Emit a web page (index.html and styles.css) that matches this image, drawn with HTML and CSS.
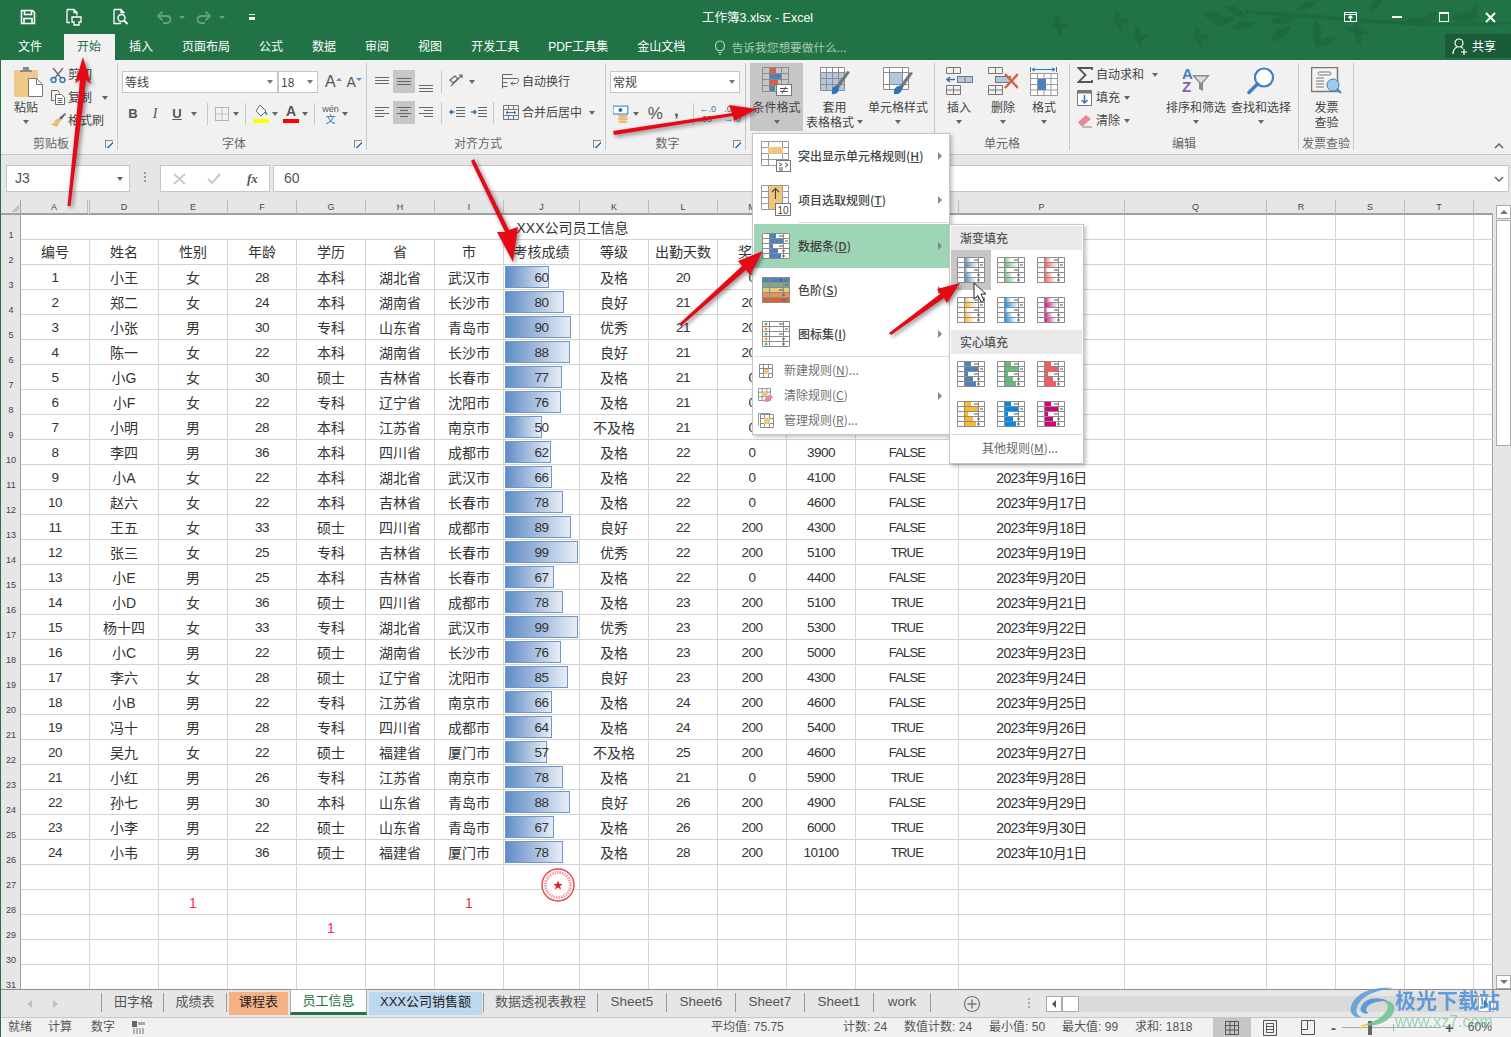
FILE: index.html
```html
<!DOCTYPE html>
<html lang="zh-CN">
<head>
<meta charset="utf-8">
<title>工作簿3.xlsx - Excel</title>
<link rel="stylesheet" href="styles.css">
</head>
<body>
<svg class="defs" width="0" height="0" aria-hidden="true">
  <defs>
    <linearGradient id="gb"><stop offset="0" stop-color="#4f81bd"/><stop offset="1" stop-color="#fff"/></linearGradient>
    <linearGradient id="gg"><stop offset="0" stop-color="#63be7b"/><stop offset="1" stop-color="#fff"/></linearGradient>
    <linearGradient id="gr"><stop offset="0" stop-color="#ff555a"/><stop offset="1" stop-color="#fff"/></linearGradient>
    <linearGradient id="go"><stop offset="0" stop-color="#ffb628"/><stop offset="1" stop-color="#fff"/></linearGradient>
    <linearGradient id="gl"><stop offset="0" stop-color="#008aef"/><stop offset="1" stop-color="#fff"/></linearGradient>
    <linearGradient id="gp"><stop offset="0" stop-color="#d6007b"/><stop offset="1" stop-color="#fff"/></linearGradient>
    <symbol id="tgrid" viewBox="0 0 28 26">
      <path d="M.5.5h27v25H.5zM.5 5.500h27M.5 10.500h27M.5 15.500h27M.5 20.500h27M7.500.5v25M21.500.5v25" fill="none" stroke="#8c8c8c"/>
      <path d="M17 3h4M23 8h3M17 13h4M20 18h3M20 23h3" stroke="#555" fill="none"/>
    </symbol>
    <symbol id="tbars" viewBox="0 0 28 26">
      <rect x="7" y="1" width="7" height="4"/><rect x="7" y="6" width="14" height="4"/><rect x="7" y="11" width="4" height="4"/><rect x="7" y="16" width="9" height="4"/><rect x="7" y="21" width="12" height="4"/>
    </symbol>
    <symbol id="sgrid" viewBox="0 0 14 14">
      <path d="M.5.5h13v13H.5zM.5 4.500h13M.5 9.500h13M4.500.5v13M9.500.5v13" fill="none" stroke="#8c8c8c"/>
    </symbol>
    <path id="leaf" d="M0 0Q9-9 24-1 12 7 0 0Z"/>
    <path id="bird" d="M-9 1l5-1 1-8q2-4 4-1l2 8 7-1-1 5-5 0-1 9-4-5-1-5Z"/>
  </defs>
</svg>

<div class="app">
  <header class="titlebar">
    <svg class="leaves" width="511" height="60" viewBox="1000 0 511 60" aria-hidden="true">
      <g fill="#1e6a3f">
        <use href="#bird" x="1058" y="25"/><use href="#bird" x="1118" y="20"/><use href="#bird" x="1138" y="36"/><use href="#bird" x="1198" y="36"/>
        <path d="M1245 10c40 2 80 5 110 8 40 2 80 8 155 4v2c-70 5-115 0-155-2-30-3-70-5-110-9Z"/>
        <use href="#leaf" transform="translate(1202 14) rotate(15)"/><use href="#leaf" transform="translate(1212 25) rotate(-15)"/><use href="#leaf" transform="translate(1232 28) rotate(-10)"/>
        <use href="#leaf" transform="translate(1225 6) rotate(30)"/><use href="#leaf" transform="translate(1270 22) rotate(-5) scale(1.1)"/><use href="#leaf" transform="translate(1270 42) rotate(-35) scale(1.1)"/>
        <use href="#leaf" transform="translate(1316 20) rotate(90) scale(1.1)"/><use href="#leaf" transform="translate(1315 46) rotate(-20)"/><use href="#leaf" transform="translate(1296 10) rotate(-20)"/>
        <use href="#leaf" transform="translate(1355 22) rotate(80)"/><use href="#leaf" transform="translate(1406 20) rotate(10)"/><use href="#leaf" transform="translate(1420 28) rotate(-40)"/>
        <use href="#leaf" transform="translate(1450 18) rotate(0) scale(1.2)"/><use href="#leaf" transform="translate(1470 25) rotate(-70) scale(.9)"/><use href="#leaf" transform="translate(1346 28) rotate(15)"/>
        <use href="#leaf" transform="translate(1370 12) rotate(-50)"/>
      </g>
    </svg>
    <div class="qat">
      <svg class="q1" width="16" height="16" viewBox="0 0 16 16"><path d="M1.500 1.500h11l2 2v11h-13zM4.500 1.500v4h7v-4M4 14.500v-5h8v5" fill="none" stroke="#fff" stroke-width="1.600"/></svg>
      <svg class="q2" width="18" height="18" viewBox="0 0 18 18"><path d="M2 1.500h7l3 3v3M2 1.500v13h3M9 1.500v3h3" fill="none" stroke="#fff" stroke-width="1.300"/><path d="M7 9h9v5h-2v3H9v-3H7z" fill="none" stroke="#fff" stroke-width="1.300"/></svg>
      <svg class="q3" width="18" height="18" viewBox="0 0 18 18"><path d="M2 1.500h7l3 3v1M2 1.500v14h7M9 1.500v3h3" fill="none" stroke="#fff" stroke-width="1.300"/><circle cx="9.500" cy="10" r="3.500" fill="none" stroke="#fff" stroke-width="1.400"/><path d="M12 12.500l3.500 3.500" stroke="#fff" stroke-width="2"/></svg>
      <svg class="q4" width="16" height="14" viewBox="0 0 16 14"><path d="M4.500 6h6q4 0 4 3.500t-4 3.500H7M6.500 1.500L2 6l4.500 4.500" fill="none" stroke="#6a9f80" stroke-width="1.800"/></svg>
      <span class="qcaret dim"></span>
      <svg class="q5" width="16" height="14" viewBox="0 0 16 14"><path d="M11.500 6h-6q-4 0-4 3.500t4 3.500H9M9.500 1.500L14 6l-4.500 4.500" fill="none" stroke="#6a9f80" stroke-width="1.800"/></svg>
      <span class="qcaret dim"></span>
      <span class="qmore"></span>
    </div>
    <div class="doc-title">工作簿3.xlsx - Excel</div>
    <div class="winbtns">
      <svg class="w1" width="14" height="11" viewBox="0 0 14 11"><path d="M.5.5h12v9H.5zM.5 2.500h12" fill="none" stroke="#fff"/><path d="M6.500 9V5M4.500 6l2-2 2 2" fill="none" stroke="#fff" stroke-width="1.300"/></svg>
      <span class="w2"></span>
      <span class="w3"></span>
      <svg class="w4" width="11" height="11" viewBox="0 0 11 11"><path d="M1 1l9 9M10 1l-9 9" stroke="#fff" stroke-width="2"/></svg>
    </div>
  </header>

  <nav class="tabs">
    <span class="tab file">文件</span>
    <span class="tab active">开始</span>
    <span class="tab">插入</span>
    <span class="tab">页面布局</span>
    <span class="tab">公式</span>
    <span class="tab">数据</span>
    <span class="tab">审阅</span>
    <span class="tab">视图</span>
    <span class="tab">开发工具</span>
    <span class="tab">PDF工具集</span>
    <span class="tab">金山文档</span>
    <span class="tell">
      <svg width="12" height="15" viewBox="0 0 12 15"><path d="M3.500 10.500C0 7 1.500 1 6 1s6 6 2.500 9.500zM4 12.500h4M5 14.500h2" fill="none" stroke="#a9c9b5" stroke-width="1.200"/></svg>
      告诉我您想要做什么...
    </span>
    <span class="share">
      <svg width="16" height="17" viewBox="0 0 16 17"><circle cx="7" cy="5" r="4" fill="none" stroke="#fff" stroke-width="1.200"/><path d="M1 16c0-4 2-6 4-7M9 9q1 .5 2 1.500M9 14h6M12 11v6" fill="none" stroke="#fff" stroke-width="1.200"/></svg>
      共享
    </span>
  </nav>

  <section class="ribbon">
    <div class="grp g-clip">
      <div class="grp-body">
        <div class="big b-paste">
          <div class="big-ic">
            <svg width="29" height="30" viewBox="0 0 29 30"><rect x="0" y="3" width="24" height="27" rx="1" fill="#f0c987"/><path d="M6 5V3h3V0h6v3h3v2z" fill="#8a8a8a"/><path d="M14.500 11.500h8l6 6v12h-14z" fill="#fff" stroke="#7a7a7a"/><path d="M22.500 11.500v6h6" fill="none" stroke="#7a7a7a"/></svg>
          </div>
          <span>粘贴</span><span class="caret big-caret"></span>
        </div>
        <div class="smalls s-clip">
          <div class="sm"><span class="sm-ic"><svg width="16" height="16" viewBox="0 0 16 16"><path d="M3 1l8 10M13 1L5 11" stroke="#666" stroke-width="1.300" fill="none"/><circle cx="3.500" cy="13" r="2.500" fill="none" stroke="#2e75b6" stroke-width="1.400"/><circle cx="12.500" cy="13" r="2.500" fill="none" stroke="#2e75b6" stroke-width="1.400"/></svg></span>剪切</div>
          <div class="sm"><span class="sm-ic"><svg width="16" height="15" viewBox="0 0 16 15"><path d="M1.500.5h6l2 2v1M1.500.5v10h3" fill="none" stroke="#666"/><path d="M5.500 4.500h6l3 3v7h-9zM7.500 8.500h5M7.500 10.500h5M7.500 12.500h5" fill="#fff" stroke="#666"/></svg></span>复制<span class="caret c-copy"></span></div>
          <div class="sm"><span class="sm-ic"><svg width="16" height="15" viewBox="0 0 16 15"><path d="M9 5l6-5 1 1-5 6z" fill="#666"/><path d="M9 5l2 2-4 7-7-3q3 0 4-1t1-3z" fill="#e8bb7a"/></svg></span>格式刷</div>
        </div>
      </div>
      <div class="grp-label with-launch"><span>剪贴板</span><i class="launch"></i></div>
    </div>

    <div class="grp g-font">
      <div class="grp-body col">
        <div class="row r1">
          <div class="select w155"><span>等线</span><span class="caret"></span></div>
          <div class="select w40"><span>18</span><span class="caret"></span></div>
          <span class="grow-a">A<i class="up"></i></span>
          <span class="shrink-a">A<i class="down"></i></span>
        </div>
        <div class="row r2">
          <span class="fb b">B</span><span class="fb it">I</span><span class="fb un">U</span><span class="caret c10"></span>
          <span class="vs m7"></span>
          <svg class="ic14" width="14" height="14" viewBox="0 0 14 14"><path d="M.5.5h13v13H.5z" fill="none" stroke="#777" stroke-dasharray="1 1"/><path d="M7 .5v13M.5 7h13" stroke="#999" stroke-dasharray="1 1"/></svg>
          <span class="caret c10 ml4"></span>
          <span class="vs m67"></span>
          <svg class="fill" width="16" height="19" viewBox="0 0 16 19"><path d="M7 1l6 6-5 5-5-5z" fill="#fff" stroke="#666"/><path d="M12 7q3 2 2 4-2 0-2-4" fill="#2e75b6"/><rect y="15" width="16" height="4" fill="#ffff00"/></svg>
          <span class="caret c10 ml3"></span>
          <span class="color-a">A</span>
          <span class="caret c10 ml3"></span>
          <span class="vs m68"></span>
          <span class="wen">wén<em>文</em></span>
          <span class="caret c10 ml4"></span>
        </div>
      </div>
      <div class="grp-label with-launch"><span>字体</span><i class="launch"></i></div>
    </div>

    <div class="grp g-align">
      <div class="grp-body col">
        <div class="row r1a">
          <span class="ab"><svg width="14" height="10" viewBox="0 0 14 10"><path d="M0 .5h14M0 3.500h14M0 6.500h14" stroke="#666"/></svg></span>
          <span class="ab on"><svg width="14" height="10" viewBox="0 0 14 10"><path d="M0 1.500h14M0 4.500h14M0 7.500h14" stroke="#666"/></svg></span>
          <span class="ab low"><svg width="14" height="10" viewBox="0 0 14 10"><path d="M0 3.500h14M0 6.500h14M0 9.500h14" stroke="#666"/></svg></span>
          <span class="vs m47"></span>
          <svg width="17" height="17" viewBox="0 0 17 17"><path d="M2 13L13 2M10 2h3v3" fill="none" stroke="#666" stroke-width="1.200"/><path d="M1 7l5-4 3 3-5 4z" fill="none" stroke="#666" stroke-width="1.200"/></svg>
          <span class="caret c10 ml3"></span>
          <svg class="wrap-ic" width="17" height="15" viewBox="0 0 17 15"><path d="M.5.5h10M.5 4.500h15q2 0 1 3l-2 2H9M.5 8.500h5M.5 12.500h5" fill="none" stroke="#666"/><path d="M11 7.500L9 9.500l2 2" fill="none" stroke="#2e75b6"/><path d="M.5.500v14" stroke="#666"/></svg>
          <span class="tx">自动换行</span>
        </div>
        <div class="row r2a">
          <span class="ab"><svg width="14" height="11" viewBox="0 0 14 11"><path d="M0 .5h14M0 3.500h9M0 6.500h14M0 9.500h9" stroke="#666"/></svg></span>
          <span class="ab on"><svg width="14" height="11" viewBox="0 0 14 11"><path d="M0 .5h14M3 3.500h8M0 6.500h14M3 9.500h8" stroke="#666"/></svg></span>
          <span class="ab"><svg width="14" height="11" viewBox="0 0 14 11"><path d="M0 .5h14M5 3.500h9M0 6.500h14M5 9.500h9" stroke="#666"/></svg></span>
          <span class="vs m47"></span>
          <svg width="16" height="12" viewBox="0 0 16 12"><path d="M7 .5h9M7 3.500h9M7 6.500h9M7 9.500h9" stroke="#666"/><path d="M5.500 5H1M3 3L1 5l2 2" fill="none" stroke="#2e75b6" stroke-width="1.400"/></svg>
          <svg class="ml6" width="16" height="12" viewBox="0 0 16 12"><path d="M7 .5h9M7 3.500h9M7 6.500h9M7 9.500h9" stroke="#666"/><path d="M0 5h5M3 3l2 2-2 2" fill="none" stroke="#2e75b6" stroke-width="1.400"/></svg>
          <span class="vs m68b"></span>
          <svg class="wrap-ic" width="16" height="15" viewBox="0 0 16 15"><path d="M.5.500h15v14H.5zM.5 4.500h15M.5 10.500h15M5.500.5v4M5.500 10.500v4M10.500.5v4M10.500 10.500v4" fill="none" stroke="#777"/><path d="M3 7.500h10M5 6L3 7.500 5 9M11 6l2 1.500L11 9" fill="none" stroke="#2e75b6"/></svg>
          <span class="tx">合并后居中</span><span class="caret c10 ml7"></span>
        </div>
      </div>
      <div class="grp-label with-launch"><span>对齐方式</span><i class="launch"></i></div>
    </div>

    <div class="grp g-num">
      <div class="grp-body col">
        <div class="row r1"><div class="select w130"><span>常规</span><span class="caret"></span></div></div>
        <div class="row r2 rn">
          <svg width="17" height="18" viewBox="0 0 17 18"><rect x="0" y="1" width="15" height="8" fill="#fff" stroke="#2e75b6"/><circle cx="7.500" cy="5" r="2" fill="#2e75b6"/><ellipse cx="10" cy="11" rx="5" ry="1.600" fill="#e8bb7a"/><ellipse cx="10" cy="14" rx="5" ry="1.600" fill="#e8bb7a"/><ellipse cx="10" cy="17" rx="5" ry="1.200" fill="#e8bb7a"/></svg>
          <span class="caret c10 ml3"></span>
          <span class="pct">%</span><span class="comma">,</span>
          <span class="vs m-comma"></span>
          <span class="dec"><i>←.0</i><i>.00</i></span>
          <span class="dec d2"><i>.00</i><i>→.0</i></span>
        </div>
      </div>
      <div class="grp-label with-launch"><span>数字</span><i class="launch"></i></div>
    </div>

    <div class="grp g-style">
      <div class="grp-body">
        <div class="big b-cond">
          <div class="big-ic">
            <svg width="30" height="29" viewBox="0 0 30 29"><path d="M.5.5h26v24H.5zM.5 6.500h26M.5 12.500h26M.5 18.500h26M7.500.5v24M19.500.5v24" fill="none" stroke="#8c8c8c"/><rect x="8" y="1" width="6" height="5" fill="#d9603d"/><rect x="8" y="7" width="11" height="5" fill="#4f81bd"/><rect x="8" y="13" width="8" height="5" fill="#d9603d"/><rect x="8" y="19" width="5" height="5" fill="#4f81bd"/><rect x="14.500" y="17.500" width="15" height="11" fill="#fff" stroke="#777"/><path d="M18 21.500h8M18 24.500h8M24 19.500l-4 7" stroke="#555" fill="none"/></svg>
          </div>
          <span>条件格式</span><span class="caret big-caret"></span>
        </div>
        <div class="big b-table">
          <div class="big-ic">
            <svg width="30" height="28" viewBox="0 0 30 28"><path d="M.5.5h24v23H.5z" fill="#fff" stroke="#8c8c8c"/><rect x="1" y="5" width="23" height="18" fill="#b4c7e0"/><path d="M.5 5.500h24M.5 11.500h24M.5 17.500h24M6.500.5v23M12.500.5v23M18.500.5v23" fill="none" stroke="#8c8c8c"/><path d="M30 5l-3-1-11 15 3 2z" fill="#777"/><path d="M12 27q-1-6 3-8t4 3q-1 6-7 5z" fill="#2e75b6"/></svg>
          </div>
          <span>套用</span><span class="lab2">表格格式<i class="caret"></i></span>
        </div>
        <div class="big b-cell">
          <div class="big-ic">
            <svg width="30" height="28" viewBox="0 0 30 28"><path d="M.5.5h25v22H.5zM.5 5.500h25M6.500.5v22M19.500.5v22M.5 17.500h25" fill="#fff" stroke="#8c8c8c"/><rect x="7" y="6" width="12" height="11" fill="#b4c7e0"/><path d="M30 6l-3-1-11 15 3 2z" fill="#777"/><path d="M11 27q-1-6 4-8t4 3q-1 6-8 5z" fill="#2e75b6"/></svg>
          </div>
          <span>单元格样式</span><span class="caret big-caret"></span>
        </div>
      </div>
      <div class="grp-label"><span></span><span>样式</span><span></span></div>
    </div>

    <div class="grp g-cells">
      <div class="grp-body">
        <div class="big b-ins">
          <div class="big-ic"><svg width="27" height="28" viewBox="0 0 27 28"><path d="M.5.5h7v6h-7zM7.500.5h7v6h-7zM.5 18.500h7v9h-7zM7.500 18.500h7v9h-7zM.5 23h14" fill="none" stroke="#777"/><rect x="11.500" y="9.500" width="15" height="6" fill="#b4c7e0" stroke="#777"/><path d="M19 9.500v6" stroke="#777"/><path d="M9 12.500H1M4 10l-3 2.500L4 15" fill="none" stroke="#2e75b6" stroke-width="1.500"/></svg></div>
          <span>插入</span><span class="caret big-caret"></span>
        </div>
        <div class="big b-del">
          <div class="big-ic"><svg width="30" height="28" viewBox="0 0 30 28"><path d="M.5.5h7v6h-7zM7.500.5h7v6h-7zM.5 18.500h7v9h-7zM7.500 18.500h7v9h-7zM.5 23h14" fill="none" stroke="#777"/><rect x="7.500" y="9.500" width="15" height="6" fill="#b4c7e0" stroke="#777"/><path d="M17 7l13 14M30 7L17 21" stroke="#d9603d" stroke-width="2.500"/></svg></div>
          <span>删除</span><span class="caret big-caret"></span>
        </div>
        <div class="big b-fmt">
          <div class="big-ic"><svg width="28" height="30" viewBox="0 0 28 30"><path d="M.5 0v5M26.500 0v5M2 2.500h23M5 .8L2 2.500l3 1.700M22 .8l3 1.700-3 1.700" fill="none" stroke="#2e75b6"/><path d="M.5 6.500h27v22H.5zM.5 11.500h27M.5 17.500h27M.5 23h27M7.500 6.500v22M14 6.500v22M21 6.500v22" fill="#fff" stroke="#999"/><rect x="8" y="12" width="8" height="11" fill="#4f81bd"/></svg></div>
          <span>格式</span><span class="caret big-caret"></span>
        </div>
      </div>
      <div class="grp-label"><span></span><span>单元格</span><span></span></div>
    </div>

    <div class="grp g-edit">
      <div class="grp-body">
        <div class="smalls s-edit">
          <div class="sm"><span class="sm-ic"><svg width="16" height="16" viewBox="0 0 16 16"><path d="M15 3V1H1.500l7 7-7 7H15v-2" fill="none" stroke="#555" stroke-width="1.800"/></svg></span>自动求和<span class="caret c-sum"></span></div>
          <div class="sm"><span class="sm-ic"><svg width="15" height="16" viewBox="0 0 15 16"><path d="M.5.5h14v15H.5z" fill="#fff" stroke="#777"/><rect x="1" y="1" width="13" height="2.500" fill="#777"/><path d="M7.500 5v8M4.500 10l3 3 3-3" fill="none" stroke="#2e75b6" stroke-width="1.500"/></svg></span>填充<span class="caret c-fill"></span></div>
          <div class="sm"><span class="sm-ic"><svg width="16" height="14" viewBox="0 0 16 14"><path d="M1 8l8-7 5 4-8 7H4z" fill="#e8899b"/><path d="M5 13h10" stroke="#888"/></svg></span>清除<span class="caret c-fill"></span></div>
        </div>
        <div class="big b-sort">
          <div class="big-ic"><span class="az"><b class="a">A</b><b class="z">Z</b></span><svg class="funnel" width="18" height="18" viewBox="0 0 18 18"><path d="M0 1h18l-7 8v8l-4-2V9z" fill="#8a8a8a"/><path d="M3 2.500h12L9 9z" fill="#ddd"/></svg></div>
          <span>排序和筛选</span><span class="caret big-caret"></span>
        </div>
        <div class="big b-find">
          <div class="big-ic"><svg width="28" height="28" viewBox="0 0 28 28"><circle cx="17" cy="10.500" r="9" fill="#fff" stroke="#3f7fbf" stroke-width="2.200"/><path d="M10.500 17L2 25.500" stroke="#3f7fbf" stroke-width="3.500" stroke-linecap="round"/></svg></div>
          <span>查找和选择</span><span class="caret big-caret"></span>
        </div>
      </div>
      <div class="grp-label"><span></span><span>编辑</span><span></span></div>
    </div>

    <div class="grp g-inv">
      <div class="grp-body">
        <div class="big b-inv">
          <div class="big-ic"><svg width="31" height="28" viewBox="0 0 31 28"><rect x=".5" y=".5" width="26" height="24" fill="#f4f4f4" stroke="#777" stroke-width="1.500"/><rect x="7" y="5" width="13" height="3" rx="1.500" fill="none" stroke="#777"/><path d="M5 11h8M5 14h8M5 17h8M5 20h8" stroke="#777"/><circle cx="22" cy="18" r="6" fill="#9ccbf0" stroke="#3f7fbf"/><path d="M26 22l4 4" stroke="#3f7fbf" stroke-width="2"/></svg></div>
          <span>发票</span><span>查验</span>
        </div>
      </div>
      <div class="grp-label ctr">发票查验</div>
    </div>
    <svg class="collapse" width="10" height="6" viewBox="0 0 10 6"><path d="M1 5l4-4 4 4" fill="none" stroke="#666" stroke-width="1.500"/></svg>
  </section>

  <section class="formula">
    <div class="namebox"><span>J3</span><span class="caret"></span></div>
    <div class="grip"><i></i><i></i><i></i></div>
    <div class="fxbox">
      <svg width="13" height="12" viewBox="0 0 13 12"><path d="M1 1l11 10M12 1L1 11" stroke="#c8c8c8" stroke-width="1.800"/></svg>
      <svg width="14" height="12" viewBox="0 0 14 12"><path d="M1 6l4 4 8-9" fill="none" stroke="#c8c8c8" stroke-width="2"/></svg>
      <span class="fx">fx</span>
    </div>
    <div class="finput"><span>60</span><svg width="10" height="6" viewBox="0 0 10 6"><path d="M1 1l4 4 4-4" fill="none" stroke="#666" stroke-width="1.500"/></svg></div>
  </section>

  <section class="sheet">
    <div class="gridwrap">
      <table class="grid">
        <colgroup><col class="c-h"><col class="c-n"><col class="c-n"><col class="c-n"><col class="c-n"><col class="c-n"><col class="c-n"><col class="c-n"><col class="c-j"><col class="c-n"><col class="c-n"><col class="c-n"><col class="c-n"><col class="c-o"><col class="c-p"><col class="c-q"><col class="c-n"><col class="c-n"><col class="c-n"><col class="c-u"></colgroup>
        <thead><tr><th class="corner"></th><th>A</th><th>D</th><th>E</th><th>F</th><th>G</th><th>H</th><th>I</th><th>J</th><th>K</th><th>L</th><th>M</th><th>N</th><th>O</th><th>P</th><th>Q</th><th>R</th><th>S</th><th>T</th><th></th></tr></thead>
        <tbody>
          <tr><th>1</th><td colspan="14">XXX公司员工信息</td><td></td><td></td><td></td><td></td><td></td></tr>
          <tr><th>2</th><td>编号</td><td>姓名</td><td>性别</td><td>年龄</td><td>学历</td><td>省</td><td>市</td><td>考核成绩</td><td>等级</td><td>出勤天数</td><td>奖金</td><td></td><td></td><td></td><td></td><td></td><td></td><td></td><td></td></tr>
          <tr><th>3</th><td>1</td><td>小王</td><td>女</td><td>28</td><td>本科</td><td>湖北省</td><td>武汉市</td><td><div class="jw"><div class="bar" style="width:44px"></div><span>60</span></div></td><td>及格</td><td>20</td><td>0</td><td></td><td></td><td></td><td></td><td></td><td></td><td></td><td></td></tr>
          <tr><th>4</th><td>2</td><td>郑二</td><td>女</td><td>24</td><td>本科</td><td>湖南省</td><td>长沙市</td><td><div class="jw"><div class="bar" style="width:59px"></div><span>80</span></div></td><td>良好</td><td>21</td><td>200</td><td></td><td></td><td></td><td></td><td></td><td></td><td></td><td></td></tr>
          <tr><th>5</th><td>3</td><td>小张</td><td>男</td><td>30</td><td>专科</td><td>山东省</td><td>青岛市</td><td><div class="jw"><div class="bar" style="width:66px"></div><span>90</span></div></td><td>优秀</td><td>21</td><td>200</td><td></td><td></td><td></td><td></td><td></td><td></td><td></td><td></td></tr>
          <tr><th>6</th><td>4</td><td>陈一</td><td>女</td><td>22</td><td>本科</td><td>湖南省</td><td>长沙市</td><td><div class="jw"><div class="bar" style="width:65px"></div><span>88</span></div></td><td>良好</td><td>21</td><td>200</td><td></td><td></td><td></td><td></td><td></td><td></td><td></td><td></td></tr>
          <tr><th>7</th><td>5</td><td>小G</td><td>女</td><td>30</td><td>硕士</td><td>吉林省</td><td>长春市</td><td><div class="jw"><div class="bar" style="width:57px"></div><span>77</span></div></td><td>及格</td><td>21</td><td>0</td><td></td><td></td><td></td><td></td><td></td><td></td><td></td><td></td></tr>
          <tr><th>8</th><td>6</td><td>小F</td><td>女</td><td>22</td><td>专科</td><td>辽宁省</td><td>沈阳市</td><td><div class="jw"><div class="bar" style="width:56px"></div><span>76</span></div></td><td>及格</td><td>21</td><td>0</td><td></td><td></td><td></td><td></td><td></td><td></td><td></td><td></td></tr>
          <tr><th>9</th><td>7</td><td>小明</td><td>男</td><td>28</td><td>本科</td><td>江苏省</td><td>南京市</td><td><div class="jw"><div class="bar" style="width:37px"></div><span>50</span></div></td><td>不及格</td><td>21</td><td>0</td><td></td><td></td><td></td><td></td><td></td><td></td><td></td><td></td></tr>
          <tr><th>10</th><td>8</td><td>李四</td><td>男</td><td>36</td><td>本科</td><td>四川省</td><td>成都市</td><td><div class="jw"><div class="bar" style="width:46px"></div><span>62</span></div></td><td>及格</td><td>22</td><td>0</td><td>3900</td><td>FALSE</td><td></td><td></td><td></td><td></td><td></td><td></td></tr>
          <tr><th>11</th><td>9</td><td>小A</td><td>女</td><td>22</td><td>本科</td><td>湖北省</td><td>武汉市</td><td><div class="jw"><div class="bar" style="width:47px"></div><span>66</span></div></td><td>及格</td><td>22</td><td>0</td><td>4100</td><td>FALSE</td><td class="d">2023年9月16日</td><td></td><td></td><td></td><td></td><td></td></tr>
          <tr><th>12</th><td>10</td><td>赵六</td><td>女</td><td>22</td><td>本科</td><td>吉林省</td><td>长春市</td><td><div class="jw"><div class="bar" style="width:58px"></div><span>78</span></div></td><td>及格</td><td>22</td><td>0</td><td>4600</td><td>FALSE</td><td class="d">2023年9月17日</td><td></td><td></td><td></td><td></td><td></td></tr>
          <tr><th>13</th><td>11</td><td>王五</td><td>女</td><td>33</td><td>硕士</td><td>四川省</td><td>成都市</td><td><div class="jw"><div class="bar" style="width:66px"></div><span>89</span></div></td><td>良好</td><td>22</td><td>200</td><td>4300</td><td>FALSE</td><td class="d">2023年9月18日</td><td></td><td></td><td></td><td></td><td></td></tr>
          <tr><th>14</th><td>12</td><td>张三</td><td>女</td><td>25</td><td>专科</td><td>吉林省</td><td>长春市</td><td><div class="jw"><div class="bar" style="width:73px"></div><span>99</span></div></td><td>优秀</td><td>22</td><td>200</td><td>5100</td><td>TRUE</td><td class="d">2023年9月19日</td><td></td><td></td><td></td><td></td><td></td></tr>
          <tr><th>15</th><td>13</td><td>小E</td><td>男</td><td>25</td><td>本科</td><td>吉林省</td><td>长春市</td><td><div class="jw"><div class="bar" style="width:49px"></div><span>67</span></div></td><td>及格</td><td>22</td><td>0</td><td>4400</td><td>FALSE</td><td class="d">2023年9月20日</td><td></td><td></td><td></td><td></td><td></td></tr>
          <tr><th>16</th><td>14</td><td>小D</td><td>女</td><td>36</td><td>硕士</td><td>四川省</td><td>成都市</td><td><div class="jw"><div class="bar" style="width:58px"></div><span>78</span></div></td><td>及格</td><td>23</td><td>200</td><td>5100</td><td>TRUE</td><td class="d">2023年9月21日</td><td></td><td></td><td></td><td></td><td></td></tr>
          <tr><th>17</th><td>15</td><td>杨十四</td><td>女</td><td>33</td><td>专科</td><td>湖北省</td><td>武汉市</td><td><div class="jw"><div class="bar" style="width:73px"></div><span>99</span></div></td><td>优秀</td><td>23</td><td>200</td><td>5300</td><td>TRUE</td><td class="d">2023年9月22日</td><td></td><td></td><td></td><td></td><td></td></tr>
          <tr><th>18</th><td>16</td><td>小C</td><td>男</td><td>22</td><td>硕士</td><td>湖南省</td><td>长沙市</td><td><div class="jw"><div class="bar" style="width:56px"></div><span>76</span></div></td><td>及格</td><td>23</td><td>200</td><td>5000</td><td>FALSE</td><td class="d">2023年9月23日</td><td></td><td></td><td></td><td></td><td></td></tr>
          <tr><th>19</th><td>17</td><td>李六</td><td>女</td><td>28</td><td>硕士</td><td>辽宁省</td><td>沈阳市</td><td><div class="jw"><div class="bar" style="width:63px"></div><span>85</span></div></td><td>良好</td><td>23</td><td>200</td><td>4300</td><td>FALSE</td><td class="d">2023年9月24日</td><td></td><td></td><td></td><td></td><td></td></tr>
          <tr><th>20</th><td>18</td><td>小B</td><td>男</td><td>22</td><td>专科</td><td>江苏省</td><td>南京市</td><td><div class="jw"><div class="bar" style="width:47px"></div><span>66</span></div></td><td>及格</td><td>24</td><td>200</td><td>4600</td><td>FALSE</td><td class="d">2023年9月25日</td><td></td><td></td><td></td><td></td><td></td></tr>
          <tr><th>21</th><td>19</td><td>冯十</td><td>男</td><td>28</td><td>专科</td><td>四川省</td><td>成都市</td><td><div class="jw"><div class="bar" style="width:47px"></div><span>64</span></div></td><td>及格</td><td>24</td><td>200</td><td>5400</td><td>TRUE</td><td class="d">2023年9月26日</td><td></td><td></td><td></td><td></td><td></td></tr>
          <tr><th>22</th><td>20</td><td>吴九</td><td>女</td><td>22</td><td>硕士</td><td>福建省</td><td>厦门市</td><td><div class="jw"><div class="bar" style="width:42px"></div><span>57</span></div></td><td>不及格</td><td>25</td><td>200</td><td>4600</td><td>FALSE</td><td class="d">2023年9月27日</td><td></td><td></td><td></td><td></td><td></td></tr>
          <tr><th>23</th><td>21</td><td>小红</td><td>男</td><td>26</td><td>专科</td><td>江苏省</td><td>南京市</td><td><div class="jw"><div class="bar" style="width:58px"></div><span>78</span></div></td><td>及格</td><td>21</td><td>0</td><td>5900</td><td>TRUE</td><td class="d">2023年9月28日</td><td></td><td></td><td></td><td></td><td></td></tr>
          <tr><th>24</th><td>22</td><td>孙七</td><td>男</td><td>30</td><td>本科</td><td>山东省</td><td>青岛市</td><td><div class="jw"><div class="bar" style="width:65px"></div><span>88</span></div></td><td>良好</td><td>26</td><td>200</td><td>4900</td><td>FALSE</td><td class="d">2023年9月29日</td><td></td><td></td><td></td><td></td><td></td></tr>
          <tr><th>25</th><td>23</td><td>小李</td><td>男</td><td>22</td><td>硕士</td><td>山东省</td><td>青岛市</td><td><div class="jw"><div class="bar" style="width:49px"></div><span>67</span></div></td><td>及格</td><td>26</td><td>200</td><td>6000</td><td>TRUE</td><td class="d">2023年9月30日</td><td></td><td></td><td></td><td></td><td></td></tr>
          <tr><th>26</th><td>24</td><td>小韦</td><td>男</td><td>36</td><td>硕士</td><td>福建省</td><td>厦门市</td><td><div class="jw"><div class="bar" style="width:58px"></div><span>78</span></div></td><td>及格</td><td>28</td><td>200</td><td>10100</td><td>TRUE</td><td class="d">2023年10月1日</td><td></td><td></td><td></td><td></td><td></td></tr>
          <tr><th>27</th><td></td><td></td><td></td><td></td><td></td><td></td><td></td><td></td><td></td><td></td><td></td><td></td><td></td><td></td><td></td><td></td><td></td><td></td><td></td></tr>
          <tr><th>28</th><td></td><td></td><td class="red">1</td><td></td><td></td><td></td><td class="red">1</td><td></td><td></td><td></td><td></td><td></td><td></td><td></td><td></td><td></td><td></td><td></td><td></td></tr>
          <tr><th>29</th><td></td><td></td><td></td><td></td><td class="red">1</td><td></td><td></td><td></td><td></td><td></td><td></td><td></td><td></td><td></td><td></td><td></td><td></td><td></td><td></td></tr>
          <tr><th>30</th><td></td><td></td><td></td><td></td><td></td><td></td><td></td><td></td><td></td><td></td><td></td><td></td><td></td><td></td><td></td><td></td><td></td><td></td><td></td></tr>
          <tr><th>31</th><td></td><td></td><td></td><td></td><td></td><td></td><td></td><td></td><td></td><td></td><td></td><td></td><td></td><td></td><td></td><td></td><td></td><td></td><td></td></tr>
        </tbody>
      </table>
    </div>
    <aside class="vscroll">
      <span class="vbtn"><i class="tri-up"></i></span>
      <span class="vthumb"></span>
      <span class="vtrack"></span>
      <span class="vbtn"><i class="tri-down"></i></span>
    </aside>
  </section>

  <section class="sheettabs">
    <div class="navs"><i class="nav-l"></i><i class="nav-r"></i></div>
    <span class="st w-62">田字格</span>
    <span class="st w-63">成绩表</span>
    <span class="st flat orange">课程表</span>
    <span class="st act">员工信息</span>
    <span class="st flat blue">XXX公司销售额</span>
    <span class="st w-115">数据透视表教程</span>
    <span class="st w-69">Sheet5</span>
    <span class="st w-69">Sheet6</span>
    <span class="st w-69">Sheet7</span>
    <span class="st w-69">Sheet1</span>
    <span class="st w-57">work</span>
    <span class="addsheet">
      <svg width="18" height="18" viewBox="0 0 18 18"><circle cx="9" cy="9" r="7.500" fill="none" stroke="#777" stroke-width="1.200"/><path d="M9 4.500v9M4.500 9h9" stroke="#777" stroke-width="1.400"/></svg>
    </span>
    <span class="dots"><i></i><i></i><i></i></span>
    <div class="hscroll">
      <span class="hbtn"><i class="nav-ls"></i></span>
      <span class="hthumb"></span>
      <span class="htrack"></span>
      <span class="hbtn"><i class="nav-rs"></i></span>
    </div>
  </section>

  <footer class="status">
    <span class="s-a">就绪</span><span class="s-b">计算</span><span class="s-c">数字</span>
    <svg class="s-d" width="14" height="14" viewBox="0 0 14 14"><rect x="0" y="0" width="5" height="6" fill="#666"/><rect x="6" y="1" width="7" height="3" fill="#aaa"/><path d="M1 8h12M1 10h12M1 12h12" stroke="#777" stroke-dasharray="2 1"/></svg>
    <span class="s-avg">平均值: 75.75</span>
    <span class="s-cnt">计数: 24</span>
    <span class="s-m s-wide">数值计数: 24</span>
    <span class="s-m">最小值: 50</span>
    <span class="s-m">最大值: 99</span>
    <span class="s-m s-sum">求和: 1818</span>
    <span class="view on"><svg width="14" height="14" viewBox="0 0 14 14"><path d="M.5.5h13v13H.5zM.5 4.500h13M.5 9h13M5 .5v13M9.500.5v13" fill="none" stroke="#555"/></svg></span>
    <span class="view"><svg width="14" height="16" viewBox="0 0 14 16"><path d="M.5.5h13v15H.5z" fill="none" stroke="#555"/><path d="M3.500 3.500h7v9h-7zM3.500 6.500h7M3.500 9.500h7" fill="none" stroke="#555"/></svg></span>
    <span class="view"><svg width="14" height="15" viewBox="0 0 14 15"><path d="M.5.5h13v14H.5zM.5 9.500h6M6.500.5v9" fill="none" stroke="#555"/></svg></span>
    <div class="zoomer">
      <span class="zm">-</span>
      <span class="slider"><i class="knob"></i><i class="tick"></i></span>
      <span class="zp">+</span>
      <span class="zv">60%</span>
    </div>
  </footer>
</div>

<!-- 条件格式 dropdown -->
<div class="menu">
  <div class="mi big-mi">
    <svg width="30" height="31" viewBox="0 0 30 31"><path d="M.5.5h27v24H.5zM.5 6.500h27M.5 12.500h27M.5 18.500h27M7.500.5v24M21.500.5v24" fill="#fff" stroke="#999"/><rect x="7" y="6" width="15" height="7" fill="#eec77e"/><rect x="15.500" y="19.500" width="14" height="11" fill="#fff" stroke="#777"/><path d="M18 25l3-1.500-3-1.500M18 27h4M24 22l3 2-3 2M18 29h4" fill="none" stroke="#555"/></svg>
    <span class="mt">突出显示单元格规则(<u>H</u>)</span><i class="arrow"></i>
  </div>
  <div class="mi big-mi">
    <svg width="30" height="31" viewBox="0 0 30 31"><path d="M.5.5h27v24H.5zM.5 6.500h27M.5 12.500h27M.5 18.500h27M7.500.5v24M21.500.5v24" fill="#fff" stroke="#999"/><rect x="8" y="1" width="13" height="23" fill="#eec77e"/><path d="M14.500 14V4M11 7l3.500-3.500L18 7" fill="none" stroke="#444" stroke-width="1.100"/><rect x="14.500" y="18.500" width="15" height="12" fill="#fff" stroke="#777"/><text x="22" y="28.500" class="ten">10</text></svg>
    <span class="mt">项目选取规则(<u>T</u>)</span><i class="arrow"></i>
  </div>
  <div class="msep short"></div>
  <div class="mi big-mi hot">
    <svg width="30" height="26" viewBox="0 0 28 26"><rect width="28" height="26" fill="#fff"/><g fill="#4f81bd"><use href="#tbars" width="28" height="26"/></g><use href="#tgrid" width="28" height="26"/></svg>
    <span class="mt">数据条(<u>D</u>)</span><i class="arrow"></i>
  </div>
  <div class="mi big-mi">
    <svg width="30" height="26" viewBox="0 0 28 26"><rect x="0" y="0" width="28" height="5.500" fill="#4f81bd"/><rect x="0" y="5" width="28" height="5.500" fill="#7fa98f"/><rect x="0" y="10" width="28" height="5.500" fill="#eec77e"/><rect x="0" y="15" width="28" height="5.500" fill="#e8954e"/><rect x="0" y="20" width="28" height="6" fill="#d9603d"/><use href="#tgrid" width="28" height="26"/></svg>
    <span class="mt">色阶(<u>S</u>)</span><i class="arrow"></i>
  </div>
  <div class="mi big-mi">
    <svg width="30" height="26" viewBox="0 0 28 26"><rect width="28" height="26" fill="#fff"/><use href="#tgrid" width="28" height="26"/><g><circle cx="4" cy="3" r="1.500" fill="#70a88a"/><circle cx="4" cy="8" r="1.500" fill="#e8954e"/><circle cx="4" cy="13" r="1.500" fill="#70a88a"/><circle cx="4" cy="18" r="1.500" fill="#e8954e"/><circle cx="4" cy="23" r="1.500" fill="#70a88a"/></g></svg>
    <span class="mt">图标集(<u>I</u>)</span><i class="arrow"></i>
  </div>
  <div class="msep"></div>
  <div class="mi small-mi">
    <svg width="14" height="14" viewBox="0 0 14 14"><use href="#sgrid" width="14" height="14"/><rect x="5" y="5" width="5" height="5" fill="#eec77e"/></svg>
    <span class="ms">新建规则(<u>N</u>)...</span>
  </div>
  <div class="mi small-mi">
    <svg width="16" height="16" viewBox="0 0 16 16"><use href="#sgrid" width="13" height="13"/><rect x="4" y="4" width="5" height="4" fill="#eec77e"/><path d="M6 12l6-6 3 3-5 5H8z" fill="#e8899b"/></svg>
    <span class="ms">清除规则(<u>C</u>)</span><i class="arrow"></i>
  </div>
  <div class="mi small-mi">
    <svg width="16" height="15" viewBox="0 0 16 15"><path d="M.5.500h12M.5.500v12" fill="none" stroke="#999"/><use href="#sgrid" x="2" y="1" width="14" height="14"/><rect x="6" y="5" width="6" height="6" fill="#eec77e"/></svg>
    <span class="ms">管理规则(<u>R</u>)...</span>
  </div>
</div>

<div class="submenu">
  <div class="sub-h">渐变填充</div>
  <div class="tiles">
    <span class="tile sel"><svg width="28" height="26"><g fill="url(#gb)"><use href="#tbars" width="28" height="26"/></g><use href="#tgrid" width="28" height="26"/></svg></span>
    <span class="tile"><svg width="28" height="26"><g fill="url(#gg)"><use href="#tbars" width="28" height="26"/></g><use href="#tgrid" width="28" height="26"/></svg></span>
    <span class="tile"><svg width="28" height="26"><g fill="url(#gr)"><use href="#tbars" width="28" height="26"/></g><use href="#tgrid" width="28" height="26"/></svg></span>
    <span class="tile"><svg width="28" height="26"><g fill="url(#go)"><use href="#tbars" width="28" height="26"/></g><use href="#tgrid" width="28" height="26"/></svg></span>
    <span class="tile"><svg width="28" height="26"><g fill="url(#gl)"><use href="#tbars" width="28" height="26"/></g><use href="#tgrid" width="28" height="26"/></svg></span>
    <span class="tile"><svg width="28" height="26"><g fill="url(#gp)"><use href="#tbars" width="28" height="26"/></g><use href="#tgrid" width="28" height="26"/></svg></span>
  </div>
  <div class="sub-h">实心填充</div>
  <div class="tiles">
    <span class="tile"><svg width="28" height="26"><g fill="#4f81bd"><use href="#tbars" width="28" height="26"/></g><use href="#tgrid" width="28" height="26"/></svg></span>
    <span class="tile"><svg width="28" height="26"><g fill="#63be7b"><use href="#tbars" width="28" height="26"/></g><use href="#tgrid" width="28" height="26"/></svg></span>
    <span class="tile"><svg width="28" height="26"><g fill="#ff555a"><use href="#tbars" width="28" height="26"/></g><use href="#tgrid" width="28" height="26"/></svg></span>
    <span class="tile"><svg width="28" height="26"><g fill="#ffb628"><use href="#tbars" width="28" height="26"/></g><use href="#tgrid" width="28" height="26"/></svg></span>
    <span class="tile"><svg width="28" height="26"><g fill="#008aef"><use href="#tbars" width="28" height="26"/></g><use href="#tgrid" width="28" height="26"/></svg></span>
    <span class="tile"><svg width="28" height="26"><g fill="#d6007b"><use href="#tbars" width="28" height="26"/></g><use href="#tgrid" width="28" height="26"/></svg></span>
  </div>
  <div class="msep sub-sep"></div>
  <div class="sub-more">其他规则(<u>M</u>)...</div>
</div>

<!-- stamp, arrows, cursor and watermark float over the page -->
<svg class="stamp" width="36" height="36" viewBox="0 0 36 36">
  <circle cx="18" cy="18" r="16" fill="#fff" fill-opacity=".6" stroke="#e8434f" stroke-width="1.400"/>
  <circle cx="18" cy="18" r="12.500" fill="none" stroke="#f2a0a6" stroke-width="3" stroke-dasharray="1.500 1"/>
  <path d="M18 13.500l1.300 3.200 3.400.2-2.600 2.200.8 3.300-2.900-1.800-2.900 1.800.8-3.300-2.600-2.200 3.400-.2z" fill="#e8202c"/>
</svg>

<svg class="arrows" width="1511" height="1037" viewBox="0 0 1511 1037" aria-hidden="true">
  <g fill="#e60a16">
    <polygon points="67.500,206 70.500,206 86,80 91,84 83,57 75,83 80,80"/>
    <polygon points="613,131 732,113 729,105 757,109 734,121 733,116 614,135"/>
    <polygon points="471,161 474,159 509,230 518,227 513,262 497,232 505,232"/>
    <polygon points="679,324 742,266 738,261 763,251 750,275 746,270 681,326"/>
    <polygon points="889,333 940,294 937,289 960,283 947,303 944,298 891,335"/>
  </g>
</svg>

<svg class="cursor" width="14" height="22" viewBox="0 0 14 22"><path d="M1 1v16l4-3.500 3 6.500 3-1.500-3-6.500h5z" fill="#fff" stroke="#222"/></svg>

<div class="watermark">
  <svg class="wm-logo" width="46" height="42" viewBox="0 0 46 42">
    <path d="M44 1C24-1 6 5 1 19c-2 8 4 13 11 11C5 28 5 22 9 16 15 7 28 3 44 1Z" fill="#5a9ad8"/>
    <path d="M38 14c-10-5-24-3-27 6-2 5 3 8 8 6-3-1-4-4-1-7 4-4 12-5 20-5Z" fill="#4a8fd2"/>
    <path d="M12 38c14 3 29-4 32-14 2-7-4-11-11-10 6 2 6 7 2 12-5 6-13 10-23 12Z" fill="#6cc18e"/>
    <path d="M8 42c2-3 6-5 11-6l-7 6z" fill="#e9d75a"/>
  </svg>
  <div class="wm-text">
    <div class="wm-cn">极光下载站</div>
    <div class="wm-en">www.xz7.com</div>
  </div>
</div>
</body>
</html>
```

FILE: styles.css
```css
* { box-sizing: border-box; }
html, body { margin: 0; padding: 0; }
body {
  position: relative;
  width: 1511px;
  height: 1037px;
  overflow: hidden;
  background: #f1f1f1;
  font: 12px/1.2 "Noto Sans CJK SC", sans-serif;
  color: #444;
}
i, em { font-style: normal; }
u { text-underline-offset: 1px; }
.defs { position: absolute; }
.app { display: flex; flex-direction: column; height: 1037px; border-left: 1px solid #217346; }

/* title bar */
.titlebar { position: relative; display: flex; align-items: center; height: 34px; background: #217346; color: #fff; flex: none; margin-left: -1px; }
.leaves { position: absolute; left: 1000px; top: 0; }
.qat { position: relative; display: flex; align-items: center; margin-left: 20px; width: 660px; height: 34px; }
.qat svg { flex: none; }
.q2 { margin-left: 29px; }
.q3 { margin-left: 29px; }
.q4 { margin-left: 26px; }
.q5 { margin-left: 11px; }
.qcaret { width: 0; height: 0; border: 3px solid transparent; border-top: 3px solid #6a9f80; border-bottom: 0; margin-left: 7px; }
.qmore { width: 6px; height: 6px; margin-left: 24px; border-top: 1px solid #fff; border-bottom: 3px solid #fff; }
.doc-title { position: relative; margin-left: 22px; padding-top: 2px; font-size: 12.500px; white-space: nowrap; color: #fff; font-family: "Liberation Sans", "Noto Sans CJK SC", sans-serif; }
.winbtns { position: relative; margin-left: auto; display: flex; align-items: center; height: 34px; padding-right: 15px; }
.w2 { width: 10px; height: 2px; background: #fff; margin-left: 34px; }
.w3 { width: 10px; height: 10px; border: 1px solid #fff; border-top-width: 2px; margin-left: 37px; }
.w4 { margin-left: 36px; }

/* tabs */
.tabs { display: flex; align-items: stretch; height: 26px; background: #217346; color: #fff; flex: none; padding-left: 3px; margin-left: -1px; }
.tab { display: flex; align-items: center; padding: 0 14.500px; height: 26px; white-space: nowrap; font-family: "Liberation Sans", "Noto Sans CJK SC", sans-serif; }
.tab.file { margin-right: 7px; padding: 0 14.500px 0 15px; }
.tab.active { background: #f1f1f1; color: #217346; padding: 0 13.500px; }
.tell { display: flex; align-items: center; gap: 6px; margin-left: 14px; color: #a9c9b5; font-size: 11.700px; }
.share { display: flex; align-items: center; gap: 4px; margin-left: auto; width: 66px; height: 24px; padding-left: 7px; background: #1a5c38; color: #fff; }

/* ribbon */
.ribbon { display: flex; height: 95px; flex: none; background: #f1f1f1; border-bottom: 1px solid #c6c6c6; }
.grp { display: flex; flex-direction: column; height: 87px; margin-top: 3px; border-right: 1px solid #c6c6c6; flex: none; }
.grp-body { flex: none; height: 71px; display: flex; }
.grp-body.col { flex-direction: column; }
.grp-label { display: grid; grid-template-columns: 1fr auto 1fr; height: 16px; line-height: 17px; text-align: center; color: #666; }
.grp-label.with-launch { grid-template-columns: 1fr 16px; }
.grp-label.ctr { display: block; font-size: 12px; white-space: nowrap; }
.launch { justify-self: end; align-self: center; width: 8px; height: 8px; margin: 3px 4px 0 0; border: 1px solid #888; border-width: 1px 0 0 1px; position: relative; background: linear-gradient(135deg, transparent 55%, #2e75b6 55%, #2e75b6 70%, transparent 70%); }
.g-clip { width: 117px; }
.g-font { width: 249px; }
.g-align { width: 239px; }
.g-num { width: 140px; }
.g-style { width: 189px; }
.g-cells { width: 135px; }
.g-edit { width: 229px; }
.g-inv { width: 55px; }
.collapse { margin: 83px 0 0 140px; flex: none; }

.big { display: flex; flex-direction: column; align-items: center; flex: none; line-height: 15px; white-space: nowrap; }
.big-ic { height: 36px; display: flex; align-items: flex-start; justify-content: center; padding-top: 4px; position: relative; }
.big-caret { margin-top: 6px; }
.caret { display: inline-block; flex: none; width: 0; height: 0; border: 3.500px solid transparent; border-top: 4px solid #666; border-bottom: 0; }
.lab2 { display: inline-flex; align-items: center; gap: 3px; }
.b-paste { width: 34px; margin-left: 8px; }
.b-paste .big-ic { padding: 4px 0 0 5px; }
.b-cond { width: 53px; margin: 0 0 0 4px; height: 68px; background: #c6c6c6; }
.b-cond .big-ic { height: 36px; }
.b-table { width: 57px; margin-left: 3px; }
.b-cell { width: 66px; margin-left: 2px; }
.b-ins { width: 30px; margin-left: 9px; }
.b-del { width: 30px; margin-left: 14px; }
.b-fmt { width: 30px; margin-left: 11px; }
.b-sort { width: 60px; }
.b-find { width: 60px; margin-left: 5px; }
.b-inv { width: 55px; }
.az { display: flex; flex-direction: column; line-height: 12px; font: bold 15px/13px "Liberation Sans", sans-serif; margin-right: -1px; }
.az .a { color: #3f7fbf; }
.az .z { color: #8a5bb0; }
.funnel { margin-top: 7px; }

.smalls { display: flex; flex-direction: column; flex: none; }
.s-clip { margin-left: 6px; }
.s-edit { margin-left: 5px; width: 91px; }
.sm { display: flex; align-items: center; height: 23px; white-space: nowrap; }
.sm-ic { width: 18px; margin-right: 1px; display: flex; align-items: center; justify-content: center; flex: none; }
.s-edit .sm-ic { width: 19px; margin-right: 2px; }
.c-copy { margin-left: 10px; }
.c-sum { margin-left: 8px; }
.c-fill { margin-left: 4px; }

.row { display: flex; align-items: center; flex: none; }
.r1 { margin: 8px 0 0 4px; height: 22px; }
.r2 { margin: 9px 0 0 4px; height: 23px; }
.r1a { margin: 7px 0 0 4px; height: 23px; }
.r2a { margin: 8px 0 0 4px; height: 23px; }
.select { display: flex; align-items: center; justify-content: space-between; height: 22px; padding: 0 4px 0 2px; background: #fff; border: 1px solid #c6c6c6; font-size: 12px; flex: none; }
.select .caret { border-top-color: #777; }
.w155 { width: 156px; }
.w40 { width: 40px; margin-left: 0; }
.w130 { width: 130px; }
.grow-a, .shrink-a { position: relative; font-family: "Liberation Sans", sans-serif; color: #555; width: 20px; text-align: left; white-space: nowrap; }
.grow-a { font-size: 16px; margin-left: 7px; }
.shrink-a { font-size: 14px; margin-left: 2px; }
.up, .down { display: inline-block; width: 0; height: 0; border: 3px solid transparent; vertical-align: 6px; }
.up { border-bottom: 3px solid #5b8fc7; border-top: 0; }
.down { border-top: 3px solid #5b8fc7; border-bottom: 0; }
.fb { width: 22px; text-align: center; font: 12px "Liberation Sans", sans-serif; color: #555; flex: none; }
.fb.b { font-weight: 700; font-size: 13px; }
.fb.it { font-family: "Liberation Serif", serif; font-style: italic; font-size: 14px; }
.fb.un { font-weight: 700; text-decoration: underline; font-size: 13px; }
.c10 { margin: 0 3px; }
.vs { width: 1px; height: 22px; background: #c6c6c6; flex: none; }
.m7 { margin: 0 7px; }
.m67 { margin: 0 7px 0 3px; }
.m68 { margin: 0 8px 0 3px; }
.m47 { margin: 0 7px 0 4px; }
.m68b { margin: 0 8px 0 6px; }
.ml3 { margin-left: 3px; }
.ml4 { margin-left: 4px; }
.ml6 { margin-left: 6px; }
.ml7 { margin-left: 7px; }
.ic14 { flex: none; }
.fill { flex: none; margin-top: -1px; }
.color-a { width: 16px; margin-left: 2px; text-align: center; font: bold 14px/15px "Liberation Sans", sans-serif; color: #555; border-bottom: 4px solid #ff0000; }
.wen { width: 15px; display: flex; flex-direction: column; align-items: center; font: 9px/10px "Liberation Sans", sans-serif; color: #555; white-space: nowrap; }
.wen em { color: #2e75b6; font: 10px/10px "Noto Sans CJK SC", sans-serif; }
.ab { width: 22px; height: 23px; display: flex; align-items: center; justify-content: center; flex: none; }
.ab.on { background: #c6c6c6; }
.ab.low { align-items: flex-end; padding-bottom: 1px; }
.wrap-ic { margin-left: 27px; flex: none; }
.r2a .wrap-ic { margin-left: 1px; }
.tx { margin-left: 3px; white-space: nowrap; }
.r1a .caret.c10 { margin: 0 0 0 3px; }
.rn { padding-left: 3px; }
.pct { font: 17px "Liberation Sans", sans-serif; color: #555; margin-left: 6px; }
.comma { font: bold 17px "Liberation Sans", sans-serif; color: #555; margin: -6px 0 0 11px; }
.m-comma { margin: 0 6px 0 14px; }
.dec { display: flex; flex-direction: column; font: 9px/10px "Liberation Sans", sans-serif; color: #555; width: 21px; white-space: nowrap; }
.dec i:first-child { color: #2e75b6; }
.d2 i:first-child { color: #555; }
.d2 i:last-child { color: #2e75b6; }
.d2 { margin-left: 4px; }

/* formula bar */
.formula { display: flex; align-items: flex-start; height: 45px; flex: none; padding: 10px 2px 0 5px; background: #e6e6e6; font: 14px/25px "Liberation Sans", sans-serif; color: #555; }
.namebox { display: flex; align-items: center; justify-content: space-between; width: 124px; height: 27px; padding: 0 6px 0 8px; background: #fff; border: 1px solid #c6c6c6; }
.grip { display: flex; flex-direction: column; gap: 2px; width: 30px; align-items: center; padding-top: 7px; }
.grip i { width: 2px; height: 2px; background: #999; }
.fxbox { display: flex; align-items: center; width: 110px; height: 27px; padding-left: 12px; gap: 21px; background: #fff; border: 1px solid #c6c6c6; }
.fx { font: italic bold 13px "Liberation Serif", serif; color: #555; margin-left: 5px; }
.finput { display: flex; align-items: center; justify-content: space-between; flex: 1; margin-left: 3px; height: 27px; padding: 0 4px 0 10px; background: #fff; border: 1px solid #c6c6c6; }

/* sheet grid */
.sheet { display: flex; height: 789px; flex: none; background: #e6e6e6; }
.gridwrap { width: 1492px; height: 789px; overflow: hidden; flex: none; }
.grid { table-layout: fixed; width: 1492px; border-collapse: separate; border-spacing: 0; background: #fff; font: 14px/20px "Liberation Sans", "Noto Sans CJK SC", sans-serif; color: #333; }
.c-h { width: 20px; }
.c-n { width: 69px; }
.c-j { width: 76px; }
.c-o { width: 103px; }
.c-p { width: 166px; }
.c-q { width: 142px; }
.c-u { width: 20px; }
.grid thead th { height: 15px; padding: 0; background: #e6e6e6; border-bottom: 2px solid #a0a0a0; border-right: 1px solid #bdbdbd; font: 9px/12px "Liberation Sans", sans-serif; color: #444; }
.grid thead th.corner { border-right-color: #a0a0a0; background: linear-gradient(135deg, transparent 76%, #c2c2c2 76%, #c2c2c2 92%, transparent 92%) 0 0 / 18px 12px no-repeat #e6e6e6; }
.grid thead th:nth-child(2) { border-right: 3px double #bdbdbd; }
.grid thead th:last-child { border-right: 0; }
.grid tbody th { height: 25px; padding: 0 0 0 1px; background: #e6e6e6; border-right: 1px solid #a0a0a0; font: 9px/10px "Liberation Sans", sans-serif; color: #444; vertical-align: bottom; text-align: center; }
.grid td { height: 25px; padding: 2px 0 0; border-right: 1px solid #d4d4d4; border-bottom: 1px solid #d4d4d4; text-align: center; vertical-align: middle; white-space: nowrap; overflow: hidden; }
.grid tbody tr:nth-child(2) td { padding-top: 0; }
.grid td:last-child { border-right: 2px solid #a0a0a0; }
.grid tbody tr:nth-child(n+3) td:nth-child(9) { padding-top: 0; }
.grid tbody tr:nth-child(n+3) td:nth-child(2),
.grid tbody tr:nth-child(n+3) td:nth-child(5),
.grid tbody tr:nth-child(n+3) td:nth-child(11),
.grid tbody tr:nth-child(n+3) td:nth-child(12),
.grid tbody tr:nth-child(n+3) td:nth-child(13),
.jw span { font-size: 13.500px; letter-spacing: -.5px; }
.grid tbody tr:nth-child(n+3) td:nth-child(14) { font-size: 13px; letter-spacing: -.8px; }
.grid td.d { letter-spacing: -.6px; }
.grid td.red { color: #f0304a; }
.jw { display: grid; height: 24px; align-items: center; }
.jw > * { grid-area: 1 / 1; }
.bar { justify-self: start; height: 22px; margin: 1px 0 0 1px; align-self: start; background: linear-gradient(90deg, #5f8cc6, #e8edf6); border: 1px solid #6f97cf; }
.jw span { position: relative; justify-self: center; padding-top: 2px; }

.vscroll { display: flex; flex-direction: column; width: 18px; margin-left: 1px; padding: 5px 0 0 2px; }
.vbtn { display: flex; align-items: center; justify-content: center; height: 14px; flex: none; background: #fff; border: 1px solid #ababab; }
.vthumb { height: 226px; flex: none; margin-top: 1px; background: #fff; border: 1px solid #ababab; }
.vtrack { flex: 1; }
.tri-up, .tri-down { width: 0; height: 0; border: 4px solid transparent; }
.tri-up { border-bottom: 4px solid #777; border-top: 0; }
.tri-down { border-top: 4px solid #777; border-bottom: 0; }

/* sheet tabs */
.sheettabs { display: flex; align-items: flex-start; height: 28px; flex: none; background: #e6e6e6; border-top: 1px solid #8e8e8e; font: 13px/22px "Liberation Sans", "Noto Sans CJK SC", sans-serif; color: #555; white-space: nowrap; }
.navs { display: flex; width: 100px; gap: 21px; padding: 10px 0 0 26px; }
.nav-l, .nav-r { width: 0; height: 0; border: 4px solid transparent; }
.nav-l { border-right: 5px solid #c2c2c2; border-left: 0; }
.nav-r { border-left: 5px solid #c2c2c2; border-right: 0; }
.st { height: 19px; margin-top: 3px; line-height: 17px; border-right: 1px solid #999; text-align: center; flex: none; font-size: 13px; }
.w-62 { width: 63px; border-left: 1px solid #999; padding-left: 2px; }
.w-63 { width: 63px; }
.w-115 { width: 115px; border-left: 1px solid #999; margin-left: 1px; }
.w-69 { width: 69px; font-size: 13.500px; }
.w-57 { width: 57px; font-size: 13.500px; }
.st.flat { height: 23px; margin-top: 2px; line-height: 20px; border: 0; color: #222; }
.orange { width: 59px; margin-left: 2px; background: #f4b183; }
.blue { width: 113px; margin-left: 2px; background: #bdd7ee; }
.st.act { width: 77px; height: 26px; margin: -1px 0 0 2px; line-height: 22px; background: #fff; color: #217346; border: 1px solid #aaa; border-width: 1px 1px 0 1px; border-bottom: 3px solid #217346; }
.addsheet { display: flex; margin: 5px 0 0 32px; flex: none; }
.dots { display: flex; flex-direction: column; gap: 2px; margin: 8px 0 0 47px; flex: none; }
.dots i { width: 2px; height: 2px; background: #aaa; }
.hscroll { display: flex; width: 448px; height: 16px; margin: 6px 0 0 16px; flex: none; background: #d9d9d9; }
.hbtn { display: flex; align-items: center; justify-content: center; width: 16px; background: #fff; border: 1px solid #ababab; flex: none; }
.hthumb { width: 17px; background: #fff; border: 1px solid #ababab; flex: none; }
.htrack { flex: 1; }
.nav-ls, .nav-rs { width: 0; height: 0; border: 4px solid transparent; }
.nav-ls { border-right: 4px solid #555; border-left: 0; }
.nav-rs { border-left: 4px solid #555; border-right: 0; }

/* status bar */
.status { display: flex; align-items: center; height: 20px; flex: none; background: #f1f1f1; border-top: 1px solid #c6c6c6; white-space: nowrap; color: #555; font-family: "Liberation Sans", "Noto Sans CJK SC", sans-serif; }
.s-a { margin-left: 7px; }
.s-b { margin-left: 16px; }
.s-c { margin-left: 19px; }
.s-d { margin-left: 17px; flex: none; }
.s-avg { margin-left: 565px; width: 132px; flex: none; }
.s-cnt { width: 61px; flex: none; }
.s-m { width: 73px; flex: none; }
.s-wide { width: 85px; }
.s-sum { width: 78px; }
.view { display: flex; align-items: center; justify-content: center; width: 38px; height: 19px; flex: none; }
.view.on { background: #c6c6c6; }
.zoomer { display: flex; align-items: center; margin-left: 4px; flex: none; }
.zm, .zp { font: bold 15px/15px "Liberation Sans", sans-serif; color: #555; }
.slider { display: flex; align-items: center; width: 99px; height: 15px; margin: 0 4px 0 6px; background: linear-gradient(#aaa, #aaa) center / 100% 1px no-repeat; }
.tick { width: 1px; height: 7px; background: #aaa; margin-left: 21px; }
.knob { width: 4px; height: 14px; background: #666; margin-left: 26px; }
.zv { margin-left: 14px; }

/* dropdown overlays */
.menu, .submenu { position: absolute; background: #fff; border: 1px solid #c6c6c6; box-shadow: 2px 2px 4px rgba(0, 0, 0, .25); color: #444; white-space: nowrap; }
.menu { left: 752px; top: 133px; width: 198px; height: 302px; padding: 0 0 0 1px; }
.submenu { left: 949px; top: 224px; width: 135px; height: 240px; padding: 1px; }
.mi { display: flex; align-items: center; }
.big-mi { height: 44px; padding-left: 7px; }
.big-mi svg { flex: none; }
.small-mi { height: 25px; padding-left: 4px; color: #666; }
.small-mi svg { flex: none; width: 16px; }
.mt { margin-left: 7px; font-weight: 500; flex: 1; }
.ms { margin-left: 10px; flex: 1; color: #707070; }
.hot { background: #9fd5b7; height: 44px; }
.arrow { width: 0; height: 0; margin-right: 7px; border: 4px solid transparent; border-left: 4px solid #888; border-right: 0; flex: none; }
.msep { height: 1px; margin: 0 0 1px; background: #dcdcdc; }
.msep.short { margin-left: 44px; }
.sub-h { height: 24px; line-height: 24px; padding-left: 9px; background: #e9e9e9; font-weight: 500; color: #555; }
.tiles { display: grid; grid-template-columns: repeat(3, 40px); grid-auto-rows: 40px; }
.tile { display: flex; align-items: center; justify-content: center; }
.tile svg { background: #fff; }
.tile.sel { background: #c6c6c6; }
.sub-sep { margin: 0; }
.sub-more { height: 26px; line-height: 26px; text-align: center; padding-left: 7px; color: #666; }
.ten { font: 10px "Liberation Sans", sans-serif; text-anchor: middle; fill: #444; }

.stamp { position: absolute; left: 540px; top: 867px; }
.arrows { position: absolute; left: 0; top: 0; pointer-events: none; filter: drop-shadow(2px 2px 2px rgba(0, 0, 0, .45)); }
.cursor { position: absolute; left: 973px; top: 282px; }
.watermark { position: absolute; left: 1350px; top: 987px; display: flex; gap: 0; pointer-events: none; }
.wm-logo { opacity: .85; flex: none; }
.wm-text { margin-left: -1px; }
.wm-cn { font: bold 21px/24px "Noto Sans CJK SC", sans-serif; color: #4c8fd8; white-space: nowrap; opacity: .85; }
.wm-en { margin-top: 3px; font: 16px/16px "Liberation Sans", sans-serif; color: #5cc28a; white-space: nowrap; opacity: .6; }
```
